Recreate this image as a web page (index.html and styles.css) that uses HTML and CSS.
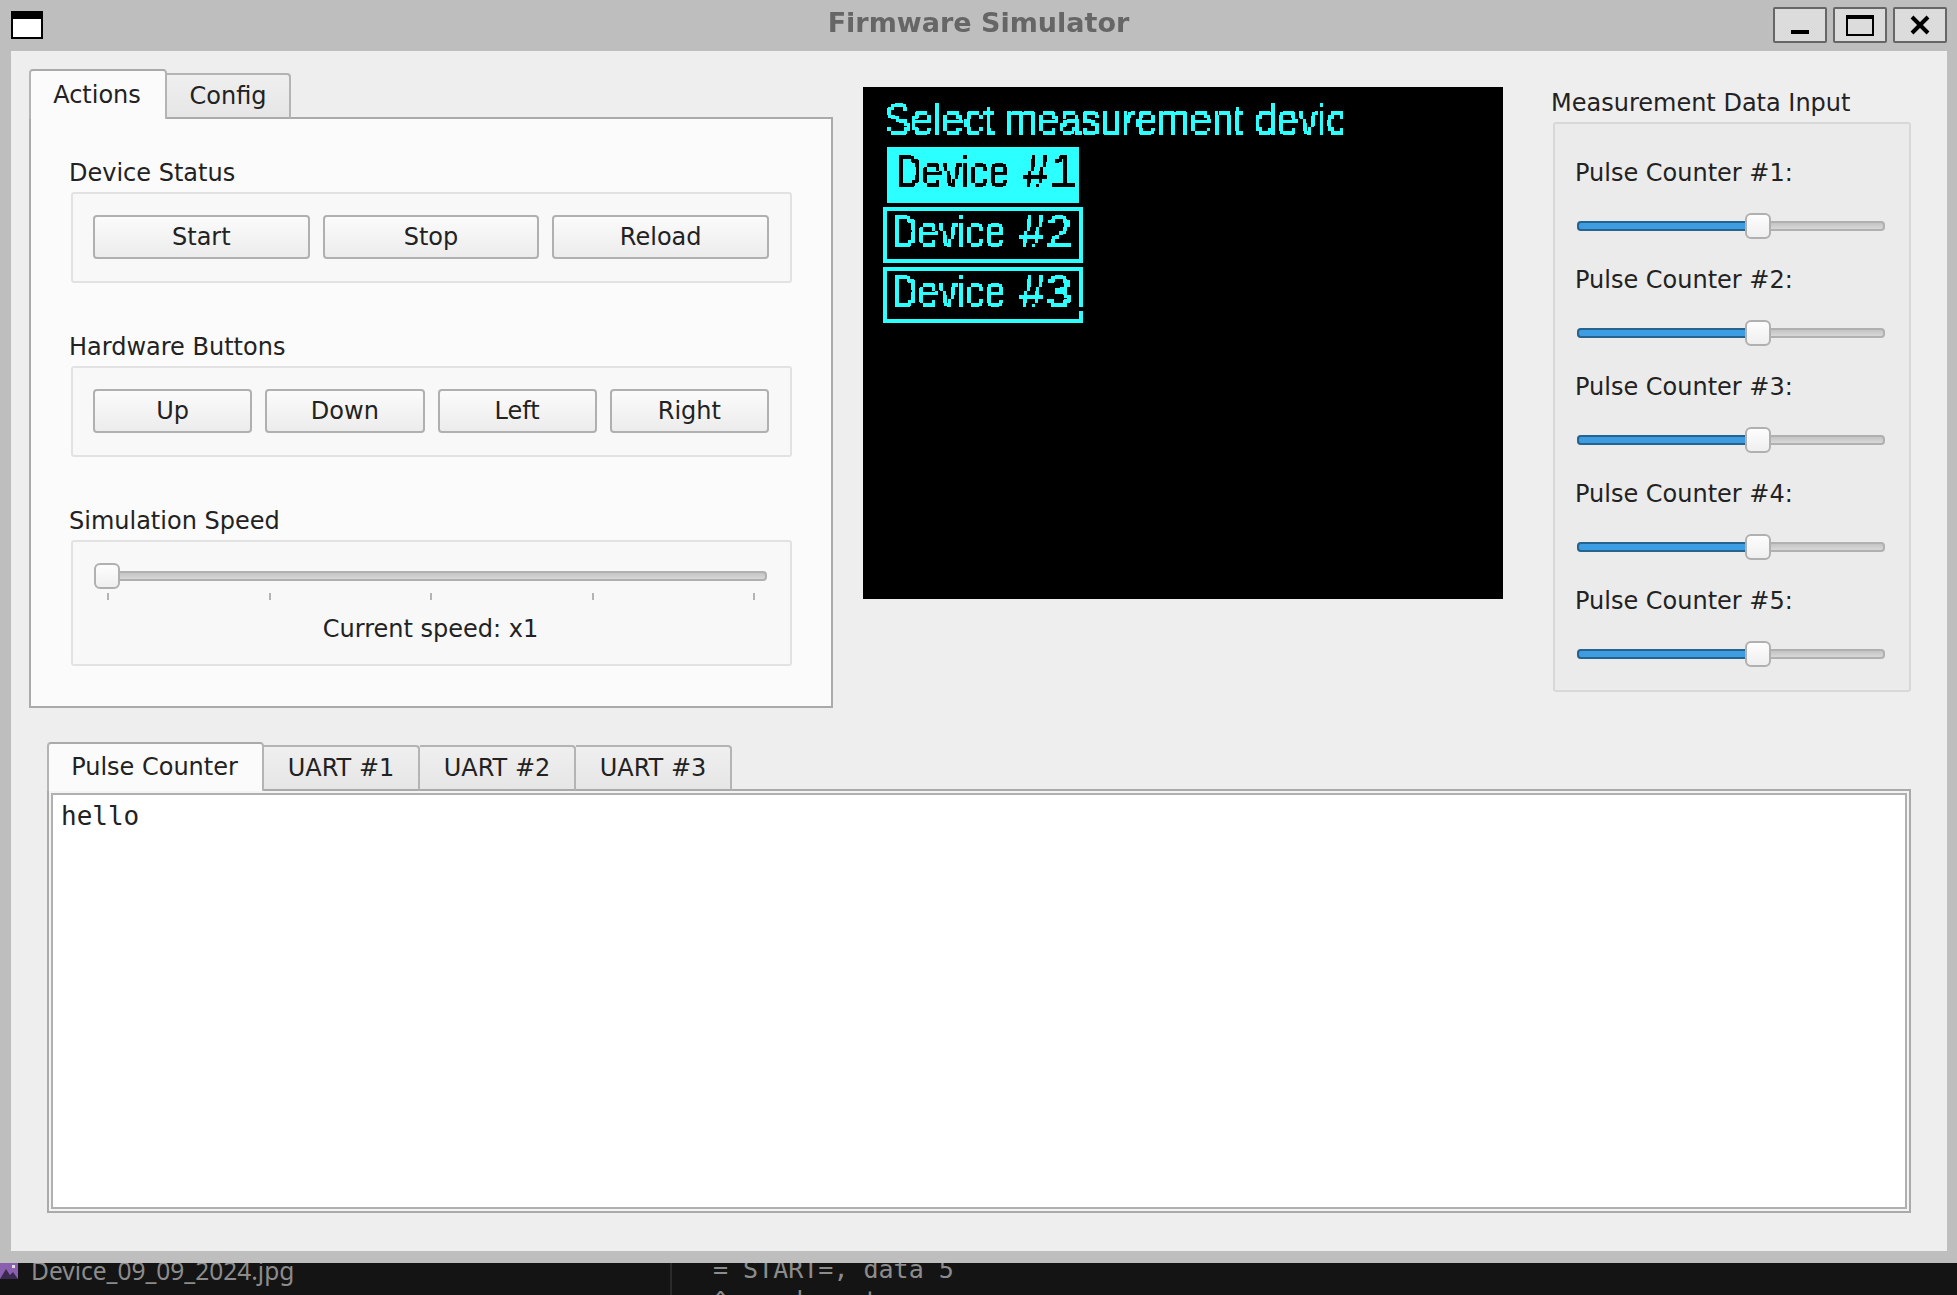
FILE: index.html
```html
<!DOCTYPE html>
<html lang="en">
<head>
  <meta charset="UTF-8" />
  <title>Firmware Simulator</title>
  <link rel="stylesheet" href="styles.css">
</head>
<body>

  <div class="window">
    <div class="titlebar">
      <div class="win-icon"></div>
      <div class="win-title">Firmware Simulator</div>
      <div class="win-buttons">
        <div class="win-btn"><svg width="20" height="20" viewBox="0 0 20 20"><rect x="1" y="15" width="18" height="4" fill="#000"/></svg></div>
        <div class="win-btn"><svg width="28" height="22" viewBox="0 0 28 22"><rect x="1" y="2" width="26" height="19" fill="none" stroke="#000" stroke-width="2"/><rect x="1" y="1" width="26" height="4" fill="#000"/></svg></div>
        <div class="win-btn"><svg width="20" height="20" viewBox="0 0 20 20"><path d="M2 2 L18 18 M18 2 L2 18" stroke="#000" stroke-width="4" fill="none"/></svg></div>
      </div>
    </div>

    <div class="client">
      <div class="top-row">

        <div class="left-col">
          <div class="tabs">
            <div class="tab tab-active">Actions</div>
            <div class="tab">Config</div>
          </div>
          <div class="actions-pane">
            <div class="group-title">Device Status</div>
            <div class="group group-status">
              <button class="btn">Start</button>
              <button class="btn">Stop</button>
              <button class="btn">Reload</button>
            </div>

            <div class="group-title">Hardware Buttons</div>
            <div class="group group-status">
              <button class="btn">Up</button>
              <button class="btn">Down</button>
              <button class="btn">Left</button>
              <button class="btn">Right</button>
            </div>

            <div class="group-title">Simulation Speed</div>
            <div class="group group-speed">
              <div class="speed-slider">
                <div class="track"></div>
                <div class="thumb thumb-start"></div>
              </div>
              <div class="ticks"><i></i><i></i><i></i><i></i><i></i></div>
              <div class="speed-label">Current speed: x1</div>
            </div>
          </div>
        </div>

        <div class="display">
          <div class="oled-head"><span class="oled-text"><span class="oled-inner">Select measurement device</span></span></div>
          <div class="oled-item oled-selected"><span class="oled-text"><span class="oled-inner">Device <span class="oled-num">#1</span></span></span></div>
          <div class="oled-item"><span class="oled-text"><span class="oled-inner">Device <span class="oled-num">#2</span></span></span></div>
          <div class="oled-item oled-cut"><span class="oled-text"><span class="oled-inner">Device <span class="oled-num">#3</span></span></span></div>
        </div>

        <div class="right-col">
          <div class="data-title">Measurement Data Input</div>
          <div class="data-group">
            <div class="pulse-row">
              <div class="pulse-label">Pulse Counter #1:</div>
              <div class="pulse-slider"><div class="track"></div><div class="fill"></div><div class="thumb"></div></div>
            </div>
            <div class="pulse-row">
              <div class="pulse-label">Pulse Counter #2:</div>
              <div class="pulse-slider"><div class="track"></div><div class="fill"></div><div class="thumb"></div></div>
            </div>
            <div class="pulse-row">
              <div class="pulse-label">Pulse Counter #3:</div>
              <div class="pulse-slider"><div class="track"></div><div class="fill"></div><div class="thumb"></div></div>
            </div>
            <div class="pulse-row">
              <div class="pulse-label">Pulse Counter #4:</div>
              <div class="pulse-slider"><div class="track"></div><div class="fill"></div><div class="thumb"></div></div>
            </div>
            <div class="pulse-row">
              <div class="pulse-label">Pulse Counter #5:</div>
              <div class="pulse-slider"><div class="track"></div><div class="fill"></div><div class="thumb"></div></div>
            </div>
          </div>
        </div>
      </div>

      <div class="log-area">
        <div class="tabs tabs-log">
          <div class="tab tab-active tab-pulse">Pulse Counter</div>
          <div class="tab tab-uart">UART #1</div>
          <div class="tab tab-uart">UART #2</div>
          <div class="tab tab-uart">UART #3</div>
        </div>
        <div class="log-pane">
          <div class="log-text">hello</div>
        </div>
      </div>
    </div>
  </div>

  <div class="desktop">
    <div class="file-col">
      <svg class="file-icon" width="18" height="16" viewBox="0 0 18 16"><rect width="18" height="16" fill="#8a5fb0"/><path d="M0 16 L6 6 L10 12 L13 9 L18 16 Z" fill="#3b2a50"/><rect x="12" y="2" width="3" height="3" fill="#ddd"/></svg>
      <span class="file-name">Device_09_09_2024.jpg</span>
    </div>
    <div class="term-col">
      <div class="term-line">= START=, data 5</div>
      <div class="term-line">^    d    t</div>
    </div>
  </div>

  <svg width="0" height="0" class="defs">
    <filter id="pixelate" x="0" y="0" width="100%" height="100%" color-interpolation-filters="sRGB">
      <feFlood x="1" y="1" width="2" height="2" flood-color="#000"/>
      <feComposite width="4" height="4"/>
      <feTile result="grid"/>
      <feComposite in="SourceGraphic" in2="grid" operator="in"/>
      <feComponentTransfer>
        <feFuncA type="discrete" tableValues="0 1"/>
      </feComponentTransfer>
      <feMorphology operator="dilate" radius="1"/>
    </filter>
  </svg>

</body>
</html>
```

FILE: styles.css
```css
* {
  box-sizing: border-box;
}

html, body {
  margin: 0;
  height: 100%;
}

body {
  width: 1957px;
  height: 1295px;
  overflow: hidden;
  background-color: #141414;
  font-family: 'DejaVu Sans', sans-serif;
  font-size: 24px;
  color: #222;
}

.defs {
  display: block;
  height: 0;
}

/* window frame */
.window {
  height: 1263px;
  background-color: #bebebe;
  padding: 0 10px 12px 11px;
  display: flex;
  flex-direction: column;
}

.titlebar {
  height: 51px;
  flex: none;
  margin-left: -11px;
  margin-right: -10px;
  padding: 7px 10px 0 11px;
  display: flex;
  justify-content: space-between;
  align-items: flex-start;
  position: relative;
}

.win-icon {
  width: 32px;
  height: 28px;
  margin-top: 4px;
  background-color: #fff;
  border: 2px solid #000;
  border-top-width: 8px;
}

.win-title {
  position: absolute;
  left: 0;
  right: 0;
  top: 7px;
  text-align: center;
  font-weight: bold;
  font-size: 27px;
  color: #666;
  filter: blur(0.5px);
}

.win-buttons {
  display: flex;
  gap: 6px;
}

.win-btn {
  width: 54px;
  height: 36px;
  background-color: #dcdcdc;
  border: 2px solid #666;
  border-radius: 2px;
  display: flex;
  align-items: center;
  justify-content: center;
}

.client {
  flex: 1;
  background-color: #eee;
  padding: 18px 36px 38px 18px;
  display: flex;
  flex-direction: column;
}

.top-row {
  display: flex;
  height: 639px;
  flex: none;
}

/* tabs */
.tabs {
  display: flex;
  align-items: flex-end;
  height: 50px;
  position: relative;
  z-index: 1;
  margin-bottom: -2px;
}

.tab {
  width: 124px;
  height: 46px;
  background: linear-gradient(#efefef, #e6e6e6);
  border: 2px solid #b4b4b4;
  border-bottom: 2px solid #aaa;
  border-left-width: 0;
  border-radius: 0 4px 0 0;
  display: flex;
  align-items: center;
  justify-content: center;
}

.tab-active {
  width: 138px;
  height: 50px;
  background: #fbfbfb;
  padding-right: 2px;
  border-left-width: 2px;
  border-bottom: none;
  border-top-color: #aaa;
  border-radius: 4px 4px 0 0;
}

.left-col {
  width: 804px;
  flex: none;
}

.actions-pane {
  height: 591px;
  background-color: #fbfbfb;
  border: 2px solid #aaa;
  padding: 33px 39px 0 40px;
}

.group-title {
  height: 40px;
  margin-left: -2px;
  padding-top: 2px;
  display: flex;
  align-items: center;
}

.group {
  background-color: #f8f8f8;
  border: 2px solid #e2e2e2;
  border-radius: 3px;
}

.group-status {
  height: 91px;
  margin-bottom: 43px;
  padding: 21px 21px 0 20px;
  display: flex;
  gap: 13px;
}

.btn {
  flex: 1;
  height: 44px;
  padding: 0;
  background: linear-gradient(#fbfbfb, #ececec);
  border: 2px solid #b0b0b0;
  border-radius: 4px;
  font-family: inherit;
  font-size: inherit;
  color: #222;
}

.group-speed {
  height: 126px;
  padding: 21px 23px 0 21px;
}

.speed-slider, .pulse-slider {
  position: relative;
  height: 26px;
}

.track {
  position: absolute;
  left: 0;
  right: 0;
  top: 8px;
  height: 10px;
  background: linear-gradient(#c4c4c4, #d8d8d8);
  border: 2px solid #b0b0b0;
  border-radius: 4px;
}

.fill {
  position: absolute;
  left: 0;
  width: 172px;
  top: 8px;
  height: 10px;
  background-color: #3d9de0;
  border: 2px solid #25648f;
  border-radius: 4px 0 0 4px;
}

.thumb {
  position: absolute;
  left: 168px;
  top: 0;
  width: 26px;
  height: 26px;
  background: linear-gradient(#fdfdfd, #efefef);
  border: 2px solid #b0b0b0;
  border-radius: 6px;
}

.thumb-start {
  left: 0;
}

.ticks {
  display: flex;
  justify-content: space-between;
  padding: 0 12px 0 13px;
  margin-top: 4px;
  height: 8px;
}

.ticks i {
  width: 2px;
  height: 7px;
  background-color: #b4b4b4;
}

.speed-label {
  text-align: center;
  margin-top: 14px;
}

/* oled display, 160x128 at 4x */
.display {
  width: 640px;
  height: 512px;
  flex: none;
  margin: 18px 50px 0 30px;
  background-color: #000;
  padding: 12px 0 0 20px;
  display: flex;
  flex-direction: column;
  gap: 4px;
  color: #2bffff;
  font-family: 'Liberation Sans', sans-serif;
  font-size: 44px;
}

.oled-head {
  width: 456px;
  height: 44px;
  overflow: hidden;
  white-space: nowrap;
  margin-left: 4px;
}

.oled-text {
  display: inline-block;
  width: 240px;
  vertical-align: top;
  filter: url(#pixelate);
  line-height: 42px;
  white-space: nowrap;
}

.oled-head .oled-text {
  width: 600px;
}

.oled-inner {
  display: inline-block;
  transform-origin: 0 0;
  transform: scaleX(0.85);
  word-spacing: 4px;
}

.oled-head .oled-inner {
  margin-left: -2px;
  transform: scaleX(0.89);
  word-spacing: 0;
}

.oled-num {
  display: inline-block;
  transform-origin: 0 0;
  transform: scaleX(1.27);
}

.oled-item {
  width: 200px;
  height: 56px;
  border: 4px solid #2bffff;
  padding: 0 0 0 4px;
  position: relative;
  overflow: hidden;
}

.oled-selected {
  width: 192px;
  margin-left: 4px;
  background-color: #2bffff;
  color: #000;
  border: none;
  padding: 4px 0 0 8px;
}

.oled-cut {
  overflow: visible;
}

.oled-cut::after {
  content: "";
  position: absolute;
  right: -4px;
  top: 36px;
  width: 4px;
  height: 4px;
  background-color: #000;
}

/* right column */
.right-col {
  width: 358px;
  flex: none;
}

.data-title {
  height: 40px;
  margin-top: 13px;
  margin-left: -2px;
  padding-top: 2px;
  display: flex;
  align-items: center;
}

.data-group {
  width: 358px;
  height: 570px;
  background-color: #ebebeb;
  border: 2px solid #d8d8d8;
  border-radius: 3px;
  padding: 28px 24px 0 22px;
  display: flex;
  flex-direction: column;
  gap: 20px;
}

.pulse-row {
  height: 87px;
}

.pulse-label {
  height: 40px;
  margin-left: -2px;
  margin-bottom: 21px;
  padding-top: 2px;
  display: flex;
  align-items: center;
}

/* log area */
.log-area {
  flex: 1;
  margin-left: 18px;
  margin-top: 34px;
  display: flex;
  flex-direction: column;
}

.tab-pulse {
  width: 217px;
}

.tab-uart {
  width: 156px;
}

.tabs-log {
  height: 49px;
}

.tabs-log .tab-active {
  height: 49px;
  padding-bottom: 2px;
}

.log-pane {
  flex: 1;
  background-color: #fff;
  border: 2px solid #aaa;
  box-shadow: inset 0 0 0 2px #f4f4f4, inset 0 0 0 4px #b0b0b0;
  padding: 10px 12px;
}

.log-text {
  font-family: 'DejaVu Sans Mono', monospace;
  font-size: 26px;
}

/* whatever is behind the window */
.desktop {
  height: 32px;
  display: flex;
  overflow: hidden;
  color: #8c8c8c;
}

.file-col {
  width: 672px;
  border-right: 2px solid #2a2a2a;
  display: flex;
  align-items: flex-start;
  gap: 13px;
}

.file-name {
  font-family: 'Noto Sans', sans-serif;
  font-size: 24.5px;
  line-height: 20px;
  margin-top: -2px;
}

.term-col {
  padding-left: 41px;
  font-family: 'DejaVu Sans Mono', monospace;
  font-size: 25px;
  line-height: 31px;
  margin-top: -9px;
}

.term-line {
  white-space: pre;
}
```
